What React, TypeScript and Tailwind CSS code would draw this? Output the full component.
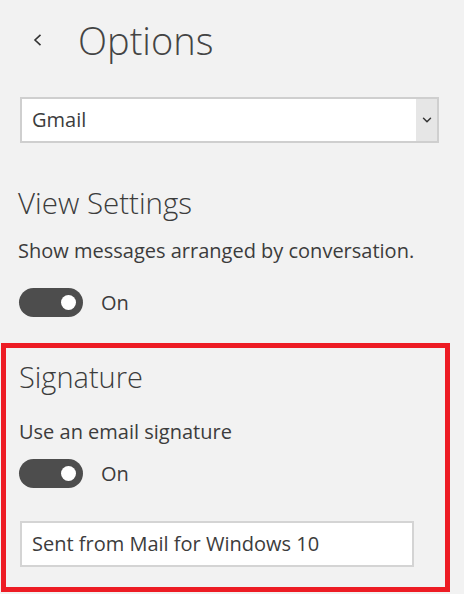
import { ChevronDown } from "lucide-react";

function Toggle({ label }: { label: string }) {
  return (
    <div className="flex items-center ml-[19px]">
      <div className="w-[64px] h-[29px] rounded-full bg-[#4d4d4d] flex items-center justify-end pr-[7px]">
        <div className="w-[15px] h-[15px] rounded-full bg-white" />
      </div>
      <span className="ml-[18px] text-[20px] leading-[28px] text-[#3c3c3c]">{label}</span>
    </div>
  );
}

export default function App() {
  return (
    <div className="w-[464px] h-[594px] bg-[#f2f2f2] overflow-hidden font-['Open_Sans',sans-serif] text-[#3c3c3c]">
      {/* header */}
      <div className="flex items-center h-[80px]">
        <svg className="ml-[33px] w-[9px] h-[12px]" viewBox="0 0 9 12" fill="none" stroke="#333" strokeWidth={1.6}>
          <path d="M7.5 0.8 L2 6 L7.5 11.2" />
        </svg>
        <h1 className="ml-[36px] text-[38px] leading-[48px] font-light text-[#444]">Options</h1>
      </div>

      {/* account picker */}
      <div className="mt-[17px] ml-[20px] w-[419px] h-[46px] border-2 border-[#cfcfcf] bg-white flex">
        <span className="flex-1 pl-[10px] text-[20px] leading-[42px]">Gmail</span>
        <div className="w-[21px] bg-[#e6e6e6] flex items-center justify-center">
          <ChevronDown className="w-[14px] h-[14px] text-[#333]" strokeWidth={2.5} />
        </div>
      </div>

      <h2 className="mt-[42px] ml-[18px] text-[29.5px] leading-[36px] font-light">View Settings</h2>
      <p className="mt-[16px] ml-[18px] text-[20px] leading-[28px]">Show messages arranged by conversation.</p>
      <div className="mt-[23px]">
        <Toggle label="On" />
      </div>

      {/* signature section */}
      <div className="mt-[26px] ml-[1px] w-[449px] h-[249px] border-[5px] border-[#ed1c24]">
        <h2 className="mt-[11px] ml-[13px] text-[29px] leading-[36px] font-light">Signature</h2>
        <p className="mt-[23px] ml-[13px] text-[20px] leading-[28px]">Use an email signature</p>
        <div className="mt-[13px] -ml-[6px]">
          <Toggle label="On" />
        </div>
        <div className="mt-[33px] ml-[14px] w-[394px] h-[46px] border-2 border-[#d4d4d4] bg-white pl-[10px] text-[20px] leading-[42px]">
          Sent from Mail for Windows 10
        </div>
      </div>
    </div>
  );
}
